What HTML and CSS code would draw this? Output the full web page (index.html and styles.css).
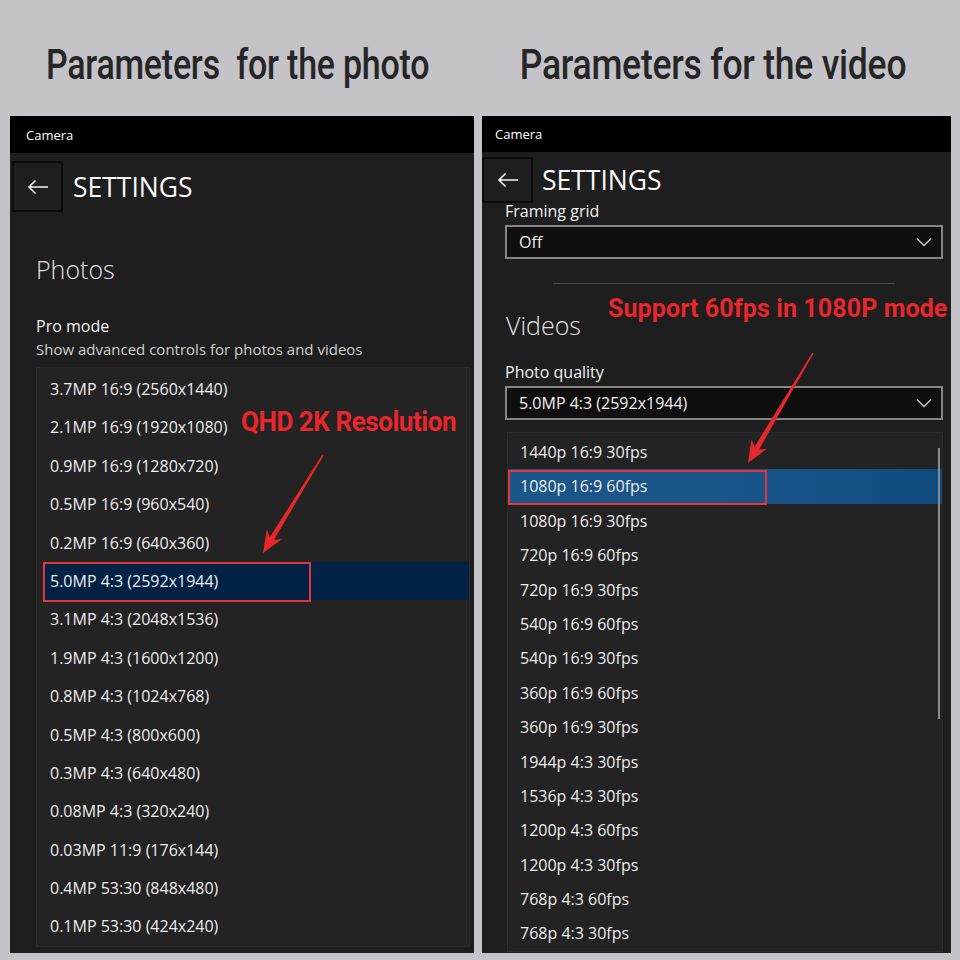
FILE: index.html
```html
<!DOCTYPE html>
<html lang="en">
<head>
<meta charset="utf-8">
<title>Camera parameters</title>
<link rel="stylesheet" href="styles.css">
</head>
<body>
<div class="page">
  <section class="col col-left">
    <h1 class="heading"><span class="heading-text">Parameters&nbsp; for the photo</span></h1>
    <div class="window">
      <div class="titlebar">Camera</div>
      <div class="content">
        <div class="header-row">
          <div class="back">
            <svg width="22" height="16" viewBox="0 0 22 16"><path d="M21 8H2M8.5 1.5L2 8l6.5 6.5" fill="none" stroke="#f2f2f2" stroke-width="1.6"/></svg>
          </div>
          <span class="title">SETTINGS</span>
        </div>
        <h2 class="section photos">Photos</h2>
        <div class="label pro">Pro mode</div>
        <div class="desc">Show advanced controls for photos and videos</div>
        <ul class="list list-photo">
          <li>3.7MP 16:9 (2560x1440)</li>
          <li>2.1MP 16:9 (1920x1080)</li>
          <li>0.9MP 16:9 (1280x720)</li>
          <li>0.5MP 16:9 (960x540)</li>
          <li>0.2MP 16:9 (640x360)</li>
          <li class="selected">5.0MP 4:3 (2592x1944)<span class="mark mark-photo"></span></li>
          <li>3.1MP 4:3 (2048x1536)</li>
          <li>1.9MP 4:3 (1600x1200)</li>
          <li>0.8MP 4:3 (1024x768)</li>
          <li>0.5MP 4:3 (800x600)</li>
          <li>0.3MP 4:3 (640x480)</li>
          <li>0.08MP 4:3 (320x240)</li>
          <li>0.03MP 11:9 (176x144)</li>
          <li>0.4MP 53:30 (848x480)</li>
          <li>0.1MP 53:30 (424x240)</li>
        </ul>
      </div>
      <div class="note note-photo">QHD 2K Resolution</div>
    </div>
  </section>

  <section class="col col-right">
    <h1 class="heading"><span class="heading-text">Parameters for the video</span></h1>
    <div class="window">
      <div class="titlebar">Camera</div>
      <div class="content">
        <div class="header-row header-row-video">
          <div class="back back-video">
            <svg width="22" height="16" viewBox="0 0 22 16"><path d="M21 8H2M8.5 1.5L2 8l6.5 6.5" fill="none" stroke="#f2f2f2" stroke-width="1.6"/></svg>
          </div>
          <span class="title">SETTINGS</span>
        </div>
        <div class="label framing">Framing grid</div>
        <div class="dropdown dd-grid">
          <span>Off</span>
          <svg width="16" height="10" viewBox="0 0 16 10"><path d="M1 1.5l7 7 7-7" fill="none" stroke="#cfcfcf" stroke-width="1.3"/></svg>
        </div>
        <div class="separator"></div>
        <h2 class="section videos">Videos</h2>
        <div class="label quality">Photo quality</div>
        <div class="dropdown dd-quality">
          <span>5.0MP 4:3 (2592x1944)</span>
          <svg width="16" height="10" viewBox="0 0 16 10"><path d="M1 1.5l7 7 7-7" fill="none" stroke="#cfcfcf" stroke-width="1.3"/></svg>
        </div>
        <ul class="list list-video">
          <li>1440p 16:9 30fps</li>
          <li class="selected">1080p 16:9 60fps<span class="mark mark-video"></span></li>
          <li>1080p 16:9 30fps</li>
          <li>720p 16:9 60fps</li>
          <li>720p 16:9 30fps</li>
          <li>540p 16:9 60fps</li>
          <li>540p 16:9 30fps</li>
          <li>360p 16:9 60fps</li>
          <li>360p 16:9 30fps</li>
          <li>1944p 4:3 30fps</li>
          <li>1536p 4:3 30fps</li>
          <li>1200p 4:3 60fps</li>
          <li>1200p 4:3 30fps</li>
          <li>768p 4:3 60fps</li>
          <li>768p 4:3 30fps</li>
          <li class="scrollbar" aria-hidden="true"></li>
        </ul>
      </div>
      <div class="note note-video">Support 60fps in 1080P mode</div>
    </div>
  </section>

  <svg class="arrows" width="960" height="960" viewBox="0 0 960 960">
    <polygon fill="#e8262b" points="323.6,455.4 274.0,539.8 282.2,538.9 263,553 266.8,529.5 269.8,537.2 322.4,454.6"/>
    <polygon fill="#e8262b" points="813.6,353.4 758.9,449.7 766.9,448.7 748,463 751.5,439.5 754.5,447.1 812.4,352.6"/>
  </svg>
</div>
</body>
</html>
```

FILE: styles.css
```css
* { box-sizing: border-box; }

html, body {
  margin: 0;
  padding: 0;
  background: #c4c3c8;
}

.page {
  position: relative;
  width: 960px;
  height: 960px;
  overflow: hidden;
  display: grid;
  grid-template-columns: 464px 469px;
  column-gap: 8px;
  padding: 0 9px 0 10px;
  font-family: "Open Sans", "Noto Sans", sans-serif;
}

.col {
  display: flex;
  flex-direction: column;
}

.heading {
  height: 116px;
  margin: 0;
  display: flex;
  justify-content: center;
  align-items: flex-start;
  padding-top: 39px;
  font-family: Roboto, "Liberation Sans", sans-serif;
  font-weight: 500;
  font-size: 43px;
  line-height: 50px;
  color: #262626;
  white-space: nowrap;
  letter-spacing: -0.3px;
}

.col-left .heading { padding-right: 8px; }
.col-right .heading { padding-right: 6px; }

.heading-text {
  display: inline-block;
  transform-origin: center;
}

.col-left .heading-text { transform: scaleX(0.79); }
.col-right .heading-text { transform: scaleX(0.826); }

.window {
  position: relative;
  height: 837px;
  background: #1e1e1e;
  overflow: hidden;
  display: flex;
  flex-direction: column;
  color: #f0f0f0;
}

.titlebar {
  height: 37px;
  flex-shrink: 0;
  background: #000;
  color: #fff;
  font-size: 13px;
  display: flex;
  align-items: center;
  padding-left: 16px;
}

.col-right .titlebar {
  height: 36px;
  padding-left: 13px;
}

.content {
  display: flex;
  flex-direction: column;
}

.header-row {
  display: flex;
  align-items: center;
  margin-top: 8px;
  height: 51px;
}

.back {
  width: 51px;
  height: 51px;
  margin-left: 2px;
  border: 2px solid #0c0c0c;
  display: flex;
  align-items: center;
  justify-content: center;
}

.header-row-video {
  margin-top: 5px;
  height: 46px;
}

.back-video {
  margin-left: 0;
  height: 46px;
}

.title {
  margin-left: 10px;
  font-size: 26.5px;
  font-weight: 400;
  color: #fafafa;
}

.col-right .title { margin-left: 9px; }

.section {
  margin: 0;
  font-size: 25px;
  font-weight: 300;
  line-height: 32px;
  color: #e2e2e2;
}

.photos {
  margin-top: 41px;
  margin-left: 26px;
}

.label {
  font-size: 16px;
  line-height: 23px;
  color: #f2f2f2;
}

.pro {
  margin-top: 30px;
  margin-left: 26px;
}

.desc {
  margin-left: 26px;
  font-size: 15px;
  line-height: 23px;
  color: #cfcfcf;
}

.list {
  list-style: none;
  margin: 0;
  padding: 0;
  background: #232323;
  border: 1px solid #2a2a2a;
  position: relative;
}

.list li {
  position: relative;
  font-size: 16px;
  color: #ededed;
  white-space: nowrap;
}

.list-photo {
  margin: 6px 4px 0 26px;
  padding-top: 2px;
}

.list-photo li {
  height: 38.4px;
  line-height: 38.4px;
  margin-left: 6px;
  padding-left: 7px;
}

.list-photo li.selected { background: #012244; }

.mark {
  position: absolute;
  border: 2px solid #e2383d;
}

.mark-photo {
  left: 0;
  top: 0;
  width: 268px;
  height: 40px;
}

.framing {
  margin-left: 23px;
  line-height: 17px;
}

.dropdown {
  height: 34px;
  border: 2px solid #858585;
  background: #0f0f0f;
  display: flex;
  align-items: center;
  justify-content: space-between;
  padding: 0 9px 0 12px;
  margin-left: 23px;
  margin-right: 8px;
  font-size: 16px;
  color: #f2f2f2;
}

.dd-grid { margin-top: 5px; }

.separator {
  height: 1px;
  background: #464646;
  margin: 24px 56px 0 71px;
}

.videos {
  margin-top: 25px;
  margin-left: 24px;
}

.quality {
  margin-top: 20px;
  margin-left: 23px;
  line-height: 22px;
}

.dd-quality { margin-top: 3px; }

.list-video {
  margin: 12px 8px 0 25px;
  padding-top: 2px;
}

.list-video li {
  height: 34.4px;
  line-height: 34.4px;
  padding-left: 12px;
}

.list-video li.selected {
  background: linear-gradient(90deg, #1a5688 0%, #185489 60%, #0f4a7e 100%);
}

.mark-video {
  left: 0;
  top: 1px;
  width: 259px;
  height: 35px;
}

.list-video li.scrollbar {
  position: absolute;
  right: 2px;
  top: 15px;
  width: 2px;
  height: 271px;
  padding: 0;
  background: #8c8c8c;
}

.note {
  position: absolute;
  font-family: Roboto, "Liberation Sans", sans-serif;
  font-weight: 700;
  color: #e8262b;
  white-space: nowrap;
  transform-origin: left center;
}

.note-photo {
  left: 231px;
  top: 290px;
  font-size: 28px;
  line-height: 32px;
  letter-spacing: -0.5px;
  transform: scaleX(0.93);
}

.note-video {
  left: 126px;
  top: 178px;
  font-size: 25px;
  line-height: 30px;
  letter-spacing: 0.1px;
}

.arrows {
  position: absolute;
  left: 0;
  top: 0;
  pointer-events: none;
}
```
